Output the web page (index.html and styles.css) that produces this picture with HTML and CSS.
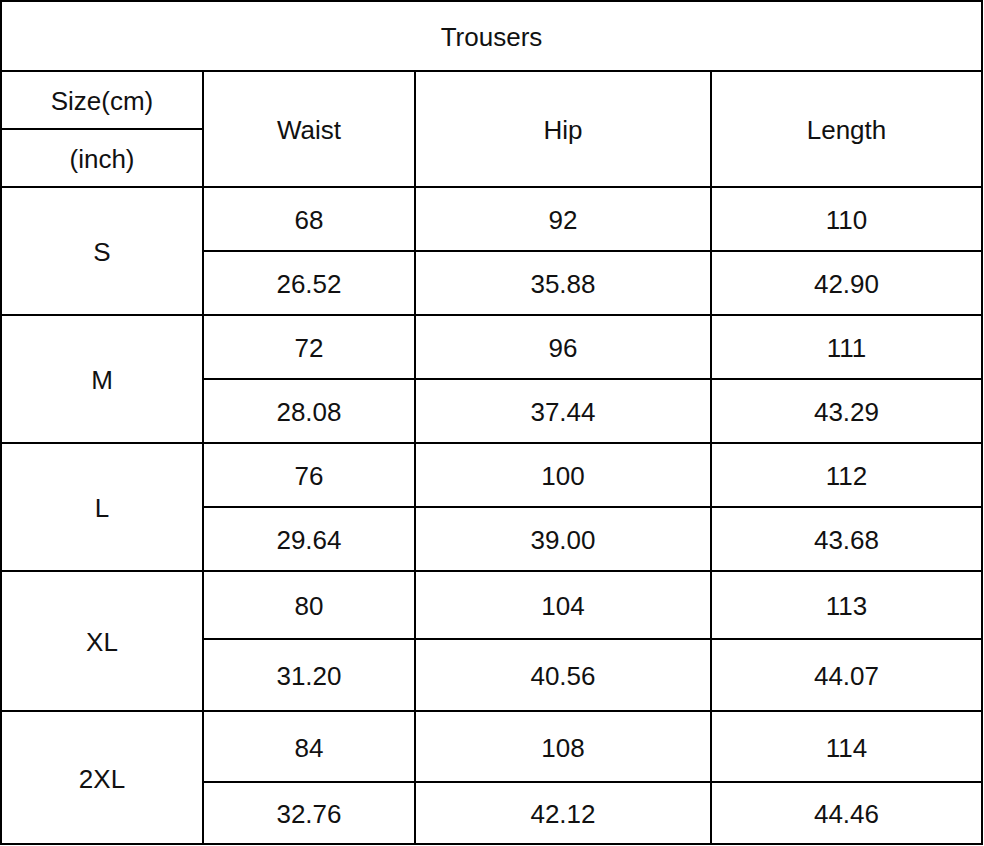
FILE: index.html
```html
<!DOCTYPE html>
<html lang="en">
<head>
<meta charset="utf-8">
<title>Trousers size chart</title>
<link rel="stylesheet" href="styles.css">
</head>
<body>
<table class="chart">
  <colgroup>
    <col class="c-size">
    <col class="c-waist">
    <col class="c-hip">
    <col class="c-length">
  </colgroup>
  <tbody>
    <tr class="r-title"><td colspan="4">Trousers</td></tr>
    <tr class="r-head"><td>Size(cm)</td><td rowspan="2">Waist</td><td rowspan="2">Hip</td><td rowspan="2">Length</td></tr>
    <tr class="r-head"><td>(inch)</td></tr>

    <tr class="r64"><td rowspan="2">S</td><td>68</td><td>92</td><td>110</td></tr>
    <tr class="r64"><td>26.52</td><td>35.88</td><td>42.90</td></tr>

    <tr class="r64"><td rowspan="2">M</td><td>72</td><td>96</td><td>111</td></tr>
    <tr class="r64"><td>28.08</td><td>37.44</td><td>43.29</td></tr>

    <tr class="r64"><td rowspan="2">L</td><td>76</td><td>100</td><td>112</td></tr>
    <tr class="r64"><td>29.64</td><td>39.00</td><td>43.68</td></tr>

    <tr class="r68"><td rowspan="2">XL</td><td>80</td><td>104</td><td>113</td></tr>
    <tr class="r72"><td>31.20</td><td>40.56</td><td>44.07</td></tr>

    <tr class="r71"><td rowspan="2">2XL</td><td>84</td><td>108</td><td>114</td></tr>
    <tr class="r62"><td>32.76</td><td>42.12</td><td>44.46</td></tr>
  </tbody>
</table>
</body>
</html>
```
FILE: styles.css
```css
html, body {
  margin: 0;
  padding: 0;
  background: #fff;
}

.chart {
  border-collapse: separate;
  border-spacing: 0;
  table-layout: fixed;
  width: 983px;
  border-top: 2px solid #000;
  border-left: 2px solid #000;
  font-family: "Liberation Sans", Arial, sans-serif;
  font-size: 26px;
  color: #111;
}

.chart td {
  padding: 2px 0 0;
  border-right: 2px solid #000;
  border-bottom: 2px solid #000;
  text-align: center;
  vertical-align: middle;
  line-height: 1;
}

.c-size { width: 202px; }
.c-waist { width: 212px; }
.c-hip { width: 296px; }
.c-length { width: 271px; }

.r-title { height: 70px; }
.r-head { height: 58px; }
.r64 { height: 64px; }
.r68 { height: 68px; }
.r72 { height: 72px; }
.r71 { height: 71px; }
.r62 { height: 62px; }
```
